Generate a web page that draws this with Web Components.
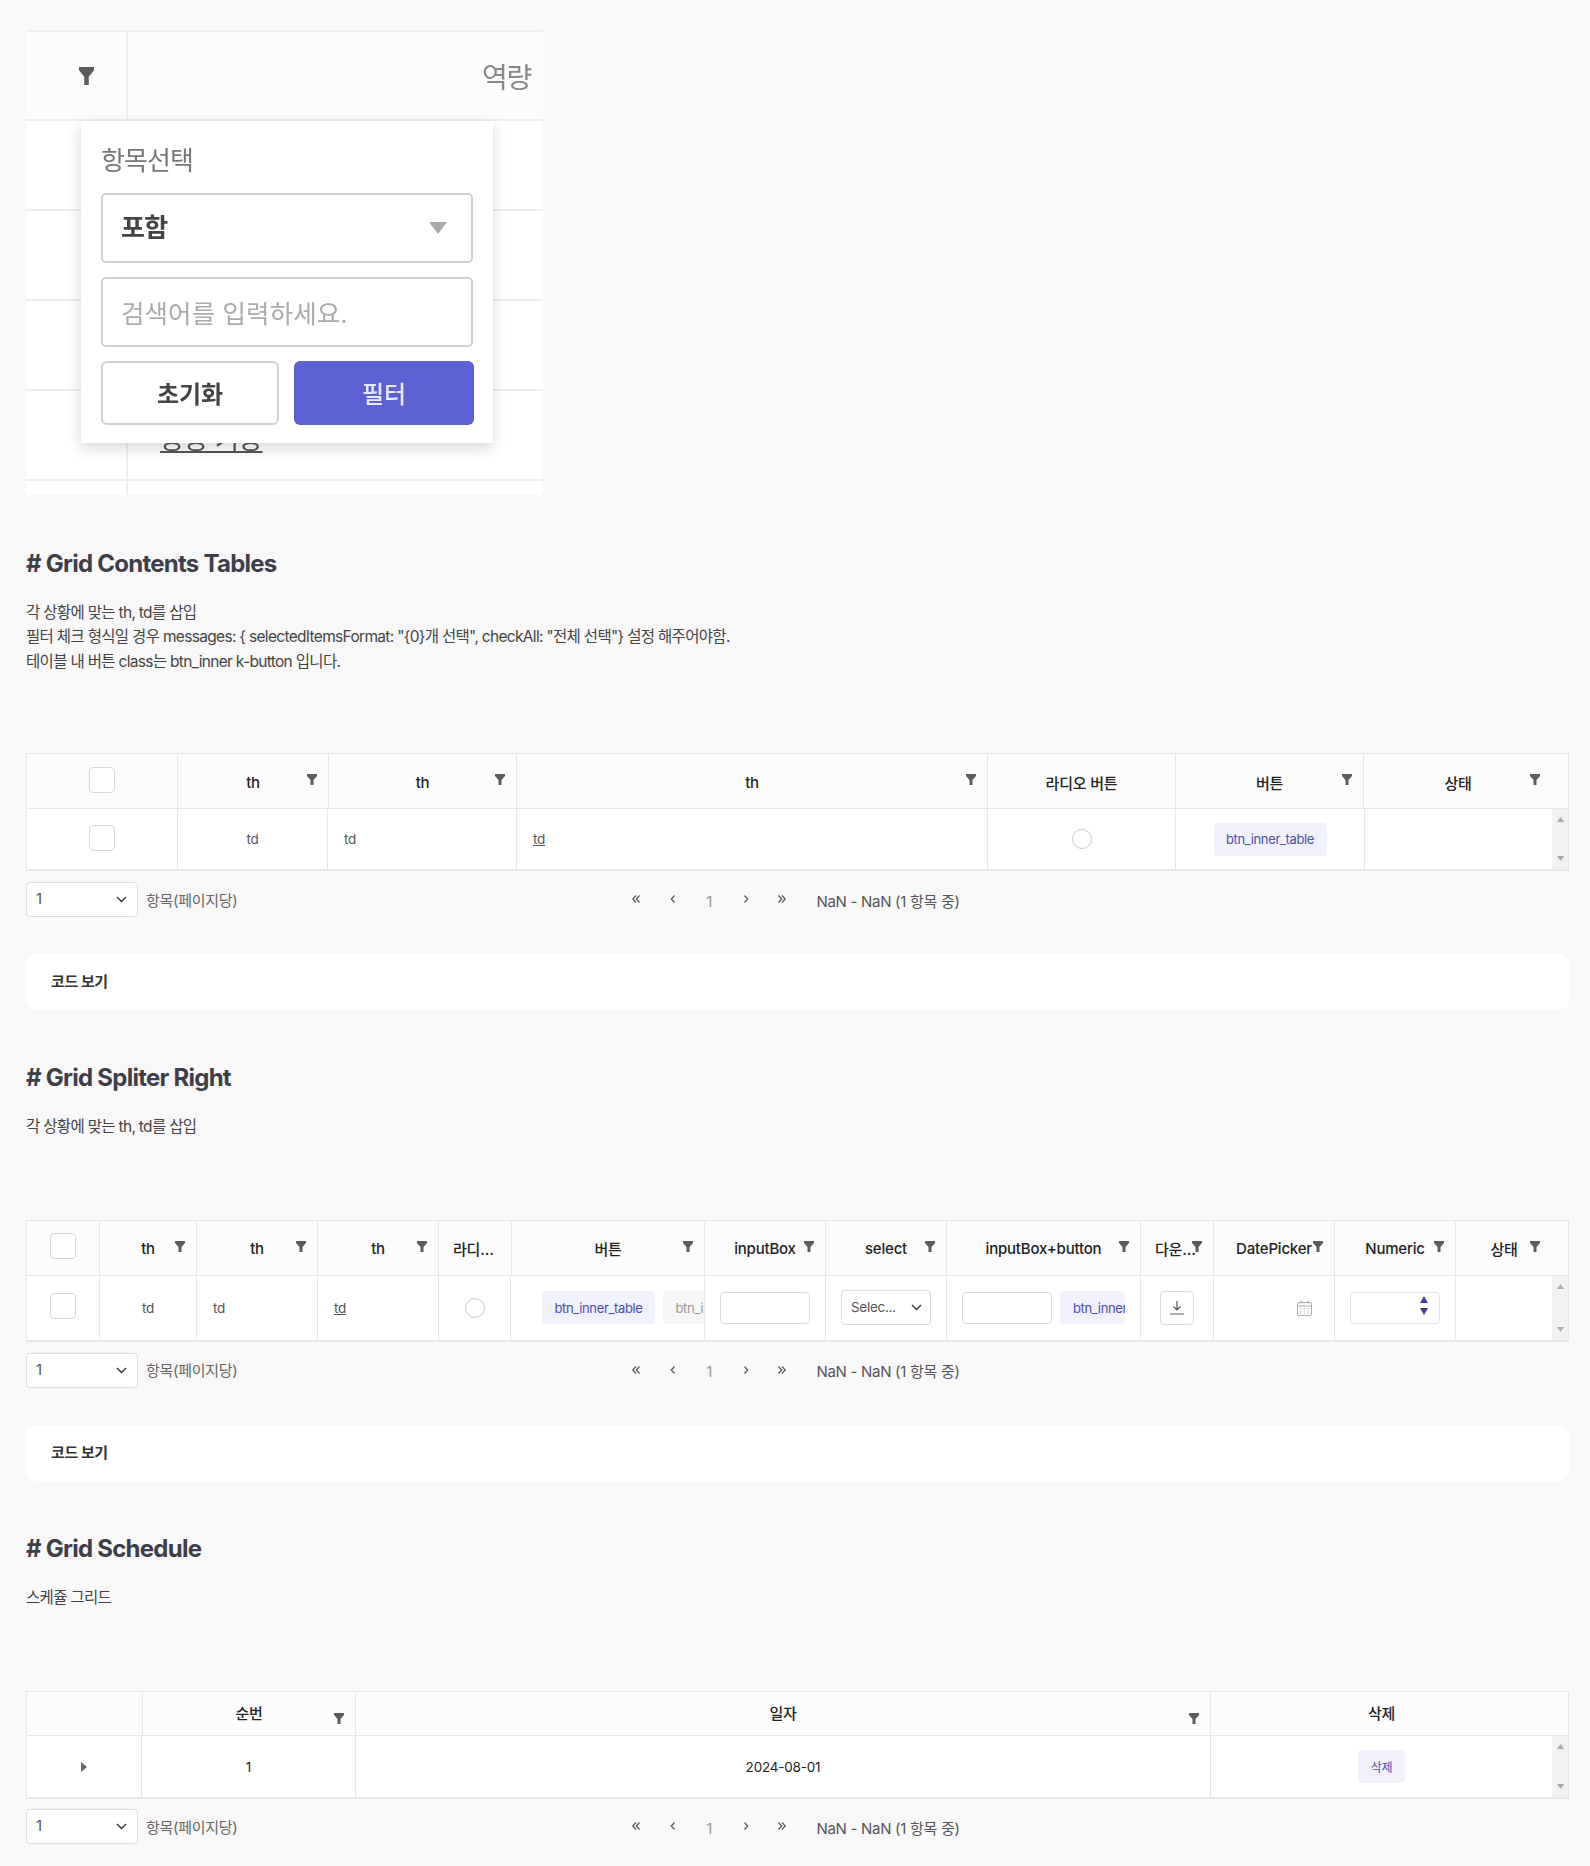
<!DOCTYPE html>
<html lang="ko">
<head>
<meta charset="utf-8">
<title>Grid</title>
<style>
  html, body { margin: 0; padding: 0; background: #f8f8f8; }
  body {
    padding: 30px 21px 22px 26px;
    font-family: Inter, "Noto Sans CJK KR", sans-serif;
    color: #333;
  }
</style>
</head>
<body>

<filter-demo></filter-demo>

<doc-section heading="# Grid Contents Tables" style="margin-top:54px">
  <div>각 상황에 맞는 th, td를 삽입</div>
  <div>필터 체크 형식일 경우 messages: { selectedItemsFormat: "{0}개 선택", checkAll: "전체 선택"} 설정 해주어야함.</div>
  <div>테이블 내 버튼 class는 btn_inner k-button 입니다.</div>
</doc-section>

<data-grid head="151px 151px 188px 471px 188px 188px 1fr" body="151px 150px 189px 471px 188px 189px 1fr" head-h="55" row-h="60">
  <grid-head slot="head"><ui-check head></ui-check></grid-head>
  <grid-head slot="head" filter>th</grid-head>
  <grid-head slot="head" filter>th</grid-head>
  <grid-head slot="head" filter>th</grid-head>
  <grid-head slot="head">라디오 버튼</grid-head>
  <grid-head slot="head" filter>버튼</grid-head>
  <grid-head slot="head" filter last>상태</grid-head>

  <grid-cell><ui-check></ui-check></grid-cell>
  <grid-cell>td</grid-cell>
  <grid-cell align="left">td</grid-cell>
  <grid-cell align="left"><u>td</u></grid-cell>
  <grid-cell><ui-radio></ui-radio></grid-cell>
  <grid-cell><inner-btn>btn_inner_table</inner-btn></grid-cell>
  <grid-cell></grid-cell>
</data-grid>
<grid-pager></grid-pager>
<code-box></code-box>

<doc-section heading="# Grid Spliter Right" style="margin-top:53px">
  <div>각 상황에 맞는 th, td를 삽입</div>
</doc-section>

<data-grid head="73px 97px 121px 121px 73px 193px 121px 121px 194px 73px 121px 121px 1fr" body="73px 97px 121px 121px 72px 194px 121px 121px 194px 73px 121px 121px 1fr" head-h="55" row-h="64" style="margin-top:80px">
  <grid-head slot="head"><ui-check head></ui-check></grid-head>
  <grid-head slot="head" filter>th</grid-head>
  <grid-head slot="head" filter>th</grid-head>
  <grid-head slot="head" filter>th</grid-head>
  <grid-head slot="head" clip>라디오 버튼</grid-head>
  <grid-head slot="head" filter>버튼</grid-head>
  <grid-head slot="head" filter>inputBox</grid-head>
  <grid-head slot="head" filter>select</grid-head>
  <grid-head slot="head" filter>inputBox+button</grid-head>
  <grid-head slot="head" filter clip>다운로드</grid-head>
  <grid-head slot="head" filter>DatePicker</grid-head>
  <grid-head slot="head" filter>Numeric</grid-head>
  <grid-head slot="head" filter last>상태</grid-head>

  <grid-cell><ui-check></ui-check></grid-cell>
  <grid-cell>td</grid-cell>
  <grid-cell align="left">td</grid-cell>
  <grid-cell align="left"><u>td</u></grid-cell>
  <grid-cell><ui-radio></ui-radio></grid-cell>
  <grid-cell align="clip" style="--pad:31px">
    <inner-btn>btn_inner_table</inner-btn><inner-btn muted>btn_inner_table</inner-btn>
  </grid-cell>
  <grid-cell><ui-input style="width:90px"></ui-input></grid-cell>
  <grid-cell><ui-select style="width:90px;height:35px;--text:13.5px;--pr:8px" value="Selec..."></ui-select></grid-cell>
  <grid-cell align="clip" style="--pad:15px">
    <ui-input style="width:90px"></ui-input><inner-btn style="width:65px;padding:0 0 0 13px;justify-content:flex-start;overflow:hidden">btn_inner_table</inner-btn>
  </grid-cell>
  <grid-cell><icon-btn></icon-btn></grid-cell>
  <grid-cell align="right"><svg-calendar></svg-calendar></grid-cell>
  <grid-cell><ui-numeric></ui-numeric></grid-cell>
  <grid-cell></grid-cell>
</data-grid>
<grid-pager></grid-pager>
<code-box></code-box>

<doc-section heading="# Grid Schedule" style="margin-top:53px">
  <div>스케쥴 그리드</div>
</doc-section>

<data-grid head="116px 213px 855px 1fr" body="115px 214px 855px 1fr" head-h="44" row-h="61" style="margin-top:81px">
  <grid-head slot="head"></grid-head>
  <grid-head slot="head" filter low raise>순번</grid-head>
  <grid-head slot="head" filter low raise>일자</grid-head>
  <grid-head slot="head" last raise>삭제</grid-head>

  <grid-cell><svg viewBox="0 0 6 10" width="6" height="10"><path d="M0 0L6 5L0 10Z" fill="#666"/></svg></grid-cell>
  <grid-cell style="color:#222">1</grid-cell>
  <grid-cell style="color:#222">2024-08-01</grid-cell>
  <grid-cell><inner-btn style="width:47px;--btn-text:12px">삭제</inner-btn></grid-cell>
</data-grid>
<grid-pager style="margin-top:10px"></grid-pager>

<script>
  const FONT = 'Inter, "Noto Sans CJK KR", sans-serif';

  // shared helper, every element below gets its shadow root this way
  function mount(el, html) {
    el.attachShadow({ mode: 'open' }).innerHTML = html;
  }

  const FUNNEL = (w, h) => `<svg viewBox="0 0 10 11" width="${w}" height="${h}" preserveAspectRatio="none" style="display:block"><path d="M0 0H10V2L6.5 6V11H3.5V6L0 2Z" fill="#5c5c5c"/></svg>`;

  class FilterDemo extends HTMLElement {
    connectedCallback() {
      mount(this, `
        <style>
          :host { display:block; position:relative; width:517px; height:465px; overflow:visible; filter:blur(.55px); font-family:${FONT}; }
          .sheet { width:517px; height:465px; overflow:hidden; background:#fff; border-top:2px solid #eee; box-sizing:border-box; }
          .row { display:grid; grid-template-columns:102px 1fr; height:90px; border-bottom:2px solid #eee; box-sizing:border-box; }
          .row > div { border-right:2px solid #eee; }
          .row > div + div { border:0; }
          .head { height:89px; background:#fcfcfc; }
          .head > div { display:flex; align-items:center; justify-content:flex-start; padding-left:53px; }
          .head > div + div { justify-content:flex-end; padding:0 12px 0 0; font-size:28px; color:#888; letter-spacing:-1.2px; }
          .under { display:flex; align-items:flex-end; padding:0 0 24px 32px; font-size:26.5px; color:#555; }
          .under u { letter-spacing:-.5px; line-height:32px; }
          .pop { position:absolute; left:55px; top:91px; width:412px; height:322px; background:#fff; box-sizing:border-box;
                 padding:21px 20px 0; box-shadow:0 5px 14px rgba(0,0,0,.16); }
          .label { font-size:26px; line-height:38px; color:#777; letter-spacing:-.9px; margin-bottom:12.5px; }
          .box { height:70px; border:2px solid #d0d0d0; border-radius:5px; box-sizing:border-box; display:flex; align-items:center;
                 justify-content:space-between; padding:0 24px 0 18px; font-size:26px; letter-spacing:-.6px; margin-bottom:14px; background:#fff; }
          .sel { font-weight:700; color:#444; padding-bottom:4px; }
          .ph { color:#aaa; font-size:25.5px; letter-spacing:.1px; }
          .btns { display:grid; grid-template-columns:178px 180px; gap:15px; height:64px; }
          .btns > div { display:flex; align-items:center; justify-content:center; font-size:24px; font-weight:700; border-radius:6px; box-sizing:border-box; }
          .reset { border:2px solid #d0d0d0; color:#444; }
          .ok { background:#5b60d2; color:#e8e8ff; font-weight:500 !important; }
        </style>
        <div class="sheet">
          <div class="row head"><div>${FUNNEL(15, 18)}</div><div>역량</div></div>
          <div class="row"><div></div><div></div></div>
          <div class="row"><div></div><div></div></div>
          <div class="row"><div></div><div></div></div>
          <div class="row"><div></div><div class="under"><u>공공 기능</u></div></div>
          <div class="row"><div></div><div></div></div>
        </div>
        <div class="pop">
          <div class="label">항목선택</div>
          <div class="box sel">포함<svg width="18" height="12" viewBox="0 0 18 12" style="margin-top:4px"><path d="M0 0H18L9 12Z" fill="#aaa"/></svg></div>
          <div class="box ph">검색어를 입력하세요.</div>
          <div class="btns"><div class="reset">초기화</div><div class="ok">필터</div></div>
        </div>`);
    }
  }

  class DocSection extends HTMLElement {
    connectedCallback() {
      mount(this, `
        <style>
          :host { display:block; font-family:${FONT}; }
          h2 { margin:0 0 22px; font-size:24px; line-height:30px; font-weight:700; color:#3e3e48; letter-spacing:-.75px; }
          .text { font-size:15.5px; line-height:24.4px; color:#444; letter-spacing:-.68px; }
        </style>
        <h2>${this.getAttribute('heading')}</h2>
        <div class="text"><slot></slot></div>`);
    }
  }

  class DataGrid extends HTMLElement {
    connectedCallback() {
      const head = this.getAttribute('head');
      const body = this.getAttribute('body');
      mount(this, `
        <style>
          :host { display:block; margin-top:79px; position:relative; background:#fff; font-family:${FONT};
                  border:solid #e7e7e7; border-width:1px 1px 2px 1px; box-sizing:border-box; }
          .head { display:grid; grid-template-columns:${head}; height:${this.getAttribute('head-h')}px; background:#fcfcfc; border-bottom:1px solid #e7e7e7; box-sizing:border-box; }
          .body { display:grid; grid-template-columns:${body}; height:${this.getAttribute('row-h')}px; }
          .bar { position:absolute; right:0; bottom:0; width:16px; height:${this.getAttribute('row-h')}px; background:#f1f1f1;
                 display:flex; flex-direction:column; justify-content:space-between; align-items:center; padding:8px 0; box-sizing:border-box; }
        </style>
        <div class="head"><slot name="head"></slot></div>
        <div class="body"><slot></slot></div>
        <div class="bar">
          <svg width="7" height="5" viewBox="0 0 7 5"><path d="M3.5 0L7 5H0Z" fill="#aaa"/></svg>
          <svg width="7" height="5" viewBox="0 0 7 5"><path d="M0 0H7L3.5 5Z" fill="#aaa"/></svg>
        </div>`);
    }
  }

  class GridHead extends HTMLElement {
    connectedCallback() {
      const filter = this.hasAttribute('filter');
      const low = this.hasAttribute('low');
      mount(this, `
        <style>
          :host { display:flex; align-items:center; justify-content:center; position:relative; min-width:0; box-sizing:border-box;
                  border-right:1px solid #e7e7e7; padding:${this.hasAttribute('raise') ? '0 0 3px' : '2px 0 0'} 0;
                  font-size:15px; font-weight:500; color:#222; letter-spacing:-.2px; }
          :host([last]) { border-right:0; padding-right:16px; }
          :host([clip]) { padding-left:14px; padding-right:14px; }
          :host([clip][filter]) { padding-right:16px; }
          .t { display:flex; }
          :host([clip]) .t { display:block; overflow:hidden; white-space:nowrap; text-overflow:ellipsis; }
          .f { position:absolute; right:${this.hasAttribute('last') ? 28 : 11.5}px; top:${low ? 21 : 20}px; }
        </style>
        <span class="t"><slot></slot></span>
        ${filter ? `<span class="f">${FUNNEL(10, 11)}</span>` : ''}`);
    }
  }

  class GridCell extends HTMLElement {
    connectedCallback() {
      mount(this, `
        <style>
          :host { display:flex; align-items:center; justify-content:center; box-sizing:border-box; min-width:0; overflow:hidden;
                  border-right:1px solid #e7e7e7; font-size:13.5px; color:#555; letter-spacing:-.2px; }
          :host(:last-child) { border-right:0; padding-right:16px; }
          :host([align="left"]) { justify-content:flex-start; padding-left:16px; }
          :host([align="right"]) { justify-content:flex-end; padding-right:22px; }
          :host([align="clip"]) { justify-content:flex-start; padding-left:var(--pad); gap:8px; white-space:nowrap; }
        </style>
        <slot></slot>`);
    }
  }

  class UiCheck extends HTMLElement {
    connectedCallback() {
      mount(this, `<style>
        :host { display:block; width:26px; height:26px; box-sizing:border-box; background:#fff; border:1px solid #d8d8d8; border-radius:4px; margin-top:-3px; }
        :host([head]) { margin-top:-5px; }
      </style>`);
    }
  }

  class UiRadio extends HTMLElement {
    connectedCallback() {
      mount(this, `<style>:host { display:block; width:20px; height:20px; box-sizing:border-box; border:1px solid #ccc; border-radius:50%; background:#fff; }</style>`);
    }
  }

  class InnerBtn extends HTMLElement {
    connectedCallback() {
      mount(this, `
        <style>
          :host { display:inline-flex; flex:none; align-items:center; justify-content:center; width:113px; height:33px; box-sizing:border-box;
                  background:#f1f1fb; color:#4b4fa8; border-radius:4px; font-size:var(--btn-text, 13px); letter-spacing:-.35px; white-space:nowrap; }
          :host([muted]) { background:#f6f6f6; color:#999; }
        </style>
        <slot></slot>`);
    }
  }

  class UiInput extends HTMLElement {
    connectedCallback() {
      mount(this, `<style>:host { display:block; flex:none; height:32px; box-sizing:border-box; border:1px solid #ddd; border-radius:4px; background:#fff; }</style>`);
    }
  }

  class UiSelect extends HTMLElement {
    connectedCallback() {
      mount(this, `
        <style>
          :host { display:flex; flex:none; align-items:center; justify-content:space-between; width:112px; height:35px; box-sizing:border-box;
                  background:#fff; border:1px solid #ddd; border-radius:4px; padding:0 var(--pr, 10px) 2px 9px; font-size:var(--text, 15px); color:#555; letter-spacing:-.3px; }
          svg { margin-top:2px; }
        </style>
        <span>${this.getAttribute('value')}</span>
        <svg width="11" height="7" viewBox="0 0 11 7"><path d="M1 1L5.5 5.5L10 1" fill="none" stroke="#333" stroke-width="1.4"/></svg>`);
    }
  }

  class IconBtn extends HTMLElement {
    connectedCallback() {
      mount(this, `
        <style>:host { display:flex; align-items:center; justify-content:center; width:34px; height:34px; box-sizing:border-box; border:1px solid #ddd; border-radius:4px; background:#fff; }</style>
        <svg width="14" height="15" viewBox="0 0 14 15"><path d="M7 1V10M3.5 6.5L7 10L10.5 6.5M0 14H14" fill="none" stroke="#555" stroke-width="1.2"/></svg>`);
    }
  }

  class SvgCalendar extends HTMLElement {
    connectedCallback() {
      mount(this, `
        <style>:host { display:block; width:15px; height:16px; }</style>
        <svg width="15" height="16" viewBox="0 0 15 16" style="display:block">
          <rect x=".5" y="2.5" width="14" height="13" rx="1.5" fill="none" stroke="#aaa"/>
          <path d="M.5 6H14.5M4 .5V3.5M11 .5V3.5" fill="none" stroke="#aaa"/>
          <path d="M3 8.5h1.5M6.7 8.5h1.5M10.5 8.5h1.5M3 11h1.5M6.7 11h1.5M10.5 11h1.5M3 13.3h1.5M6.7 13.3h1.5M10.5 13.3h1.5" stroke="#bbb"/>
        </svg>`);
    }
  }

  class UiNumeric extends HTMLElement {
    connectedCallback() {
      mount(this, `
        <style>
          :host { display:block; position:relative; width:90px; height:32px; box-sizing:border-box; border:1px solid #e4e4e4; border-radius:4px; background:#fff; }
          svg { position:absolute; left:69px; }
        </style>
        <svg style="top:3px" width="8" height="7" viewBox="0 0 8 7"><path d="M4 0L8 7H0Z" fill="#3f3fa0"/></svg>
        <svg style="top:15px" width="8" height="7" viewBox="0 0 8 7"><path d="M0 0H8L4 7Z" fill="#3f3fa0"/></svg>`);
    }
  }

  class GridPager extends HTMLElement {
    connectedCallback() {
      const chev = (d) => `<svg width="10" height="10" viewBox="0 0 10 10"><path d="${d}" fill="none" stroke="#555" stroke-width="1.2"/></svg>`;
      mount(this, `
        <style>
          :host { display:grid; grid-template-columns:112px 484px auto 1fr; align-items:center; margin-top:11px; height:35px; font-family:${FONT}; font-size:15px; color:#666; letter-spacing:-.3px; }
          .label { padding-left:8px; margin-top:-1px; }
          .nav { display:grid; grid-template-columns:repeat(5, 36.5px); justify-items:center; align-items:center; margin-left:-4px; margin-top:-1px; }
          .one { color:#999; font-size:15px; padding-top:4px; }
          .info { margin-left:16px; padding-top:1px; color:#555; }
        </style>
        <ui-select value="1"></ui-select>
        <div class="label">항목(페이지당)</div>
        <div class="nav">
          ${chev('M5 1.5L1.8 5L5 8.5M8.5 1.5L5.3 5L8.5 8.5')}
          ${chev('M6.5 1.5L3.3 5L6.5 8.5')}
          <span class="one">1</span>
          ${chev('M3.5 1.5L6.7 5L3.5 8.5')}
          ${chev('M1.5 1.5L4.7 5L1.5 8.5M5 1.5L8.2 5L5 8.5')}
        </div>
        <div class="info">NaN - NaN (1 항목 중)</div>`);
    }
  }

  class CodeBox extends HTMLElement {
    connectedCallback() {
      mount(this, `
        <style>
          :host { display:flex; align-items:center; height:56px; margin-top:37px; padding:0 0 3px 25px; box-sizing:border-box; background:#fff; border-radius:10px;
                  font-family:${FONT}; font-size:15px; font-weight:700; color:#333; letter-spacing:-.4px; }
        </style>
        코드 보기`);
    }
  }

  customElements.define('filter-demo', FilterDemo);
  customElements.define('doc-section', DocSection);
  customElements.define('data-grid', DataGrid);
  customElements.define('grid-head', GridHead);
  customElements.define('grid-cell', GridCell);
  customElements.define('ui-check', UiCheck);
  customElements.define('ui-radio', UiRadio);
  customElements.define('inner-btn', InnerBtn);
  customElements.define('ui-input', UiInput);
  customElements.define('ui-select', UiSelect);
  customElements.define('icon-btn', IconBtn);
  customElements.define('svg-calendar', SvgCalendar);
  customElements.define('ui-numeric', UiNumeric);
  customElements.define('grid-pager', GridPager);
  customElements.define('code-box', CodeBox);
</script>
</body>
</html>
